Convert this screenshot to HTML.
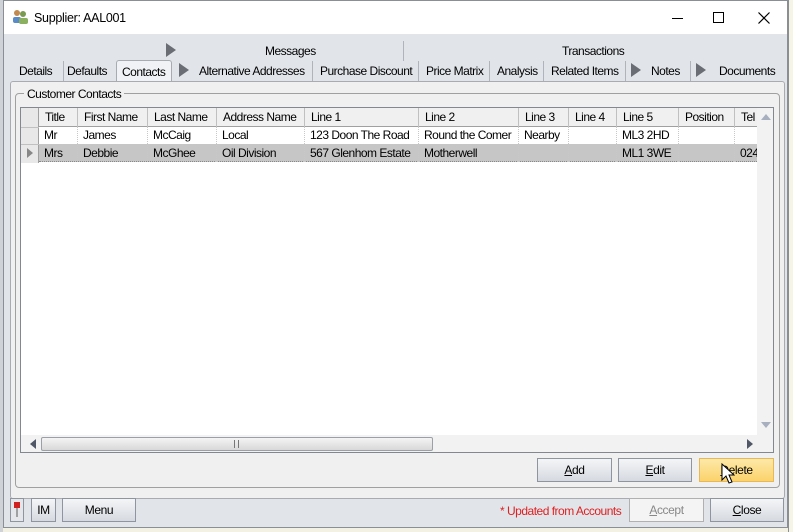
<!DOCTYPE html>
<html><head><style>
*{box-sizing:border-box;margin:0;padding:0}
body{width:793px;height:532px;overflow:hidden;background:#f3f1e4;font-family:"Liberation Sans",sans-serif;font-size:12px;color:#000;position:relative}
.a{position:absolute}
.win{left:3px;top:0;width:785px;height:528px;background:#e1e5ea;border:1px solid #8a8f96}
.t{white-space:nowrap;letter-spacing:-0.5px}
.btn{position:absolute;height:24px;border:1px solid #8e959e;background:linear-gradient(#f4f5f7,#d6dae0);text-align:center;line-height:22px;font-size:12px;letter-spacing:-0.4px}
.hd{position:absolute;top:0;height:19px;line-height:19px;padding-left:6px;border-right:1px solid #c0c0c0}
.cell{position:absolute;height:17px;line-height:17px;padding-left:5px;border-right:1px dotted #c8c8c8}
</style></head><body>
<div class="a" style="left:0;top:0;width:3px;height:532px;background:#cfd3d8"></div>
<div class="a" style="left:788px;top:0;width:5px;height:532px;background:#f6f4e6;border-left:1px solid #8a8f96"></div>
<div class="a win">
 <div class="a" style="left:0;top:0;width:783px;height:33px;background:#fff"></div>
 <svg class="a" style="left:8px;top:8px" width="17" height="15"><circle cx="5" cy="4" r="3" fill="#c08a50"/><circle cx="11" cy="5" r="3" fill="#7a9a50"/><rect x="1" y="8" width="8" height="6" rx="2" fill="#5a8ac8"/><rect x="7" y="9" width="9" height="6" rx="2" fill="#8ab060"/></svg>
 <div class="a t" style="left:30px;top:10px;font-size:12.5px;letter-spacing:-0.3px">Supplier: AAL001</div>
 <div class="a" style="left:668px;top:17px;width:11px;height:1px;background:#000"></div>
 <div class="a" style="left:709px;top:11px;width:11px;height:11px;border:1px solid #000"></div>
 <svg class="a" style="left:754px;top:11px" width="12" height="12"><path d="M0.5 0.5L11.5 11.5M11.5 0.5L0.5 11.5" stroke="#000" stroke-width="1.2"/></svg>

 <div class="a t" style="left:261px;top:43px">Messages</div>
 <div class="a t" style="left:558px;top:43px">Transactions</div>
 <div class="a" style="left:399px;top:40px;width:1px;height:20px;background:#b0b4ba"></div>
 <svg class="a" style="left:162px;top:42px" width="10" height="14"><path d="M0 0L10 7L0 14Z" fill="#6a6e74"/></svg>

 <div class="a t" style="left:15px;top:63px">Details</div>
 <div class="a" style="left:59px;top:60px;width:1px;height:20px;background:#b0b4ba"></div>
 <div class="a t" style="left:63px;top:63px">Defaults</div>
 <div class="a" style="left:112px;top:59px;width:56px;height:22px;background:#f0f2f5;border:1px solid #a8acb2;border-bottom:none;border-radius:3px 3px 0 0"></div>
 <div class="a t" style="left:118px;top:64px">Contacts</div>
 <svg class="a" style="left:175px;top:62px" width="10" height="14"><path d="M0 0L10 7L0 14Z" fill="#6a6e74"/></svg>
 <div class="a t" style="left:195px;top:63px">Alternative Addresses</div>
 <div class="a" style="left:308px;top:60px;width:1px;height:20px;background:#b0b4ba"></div>
 <div class="a t" style="left:316px;top:63px">Purchase Discount</div>
 <div class="a" style="left:414px;top:60px;width:1px;height:20px;background:#b0b4ba"></div>
 <div class="a t" style="left:422px;top:63px">Price Matrix</div>
 <div class="a" style="left:485px;top:60px;width:1px;height:20px;background:#b0b4ba"></div>
 <div class="a t" style="left:493px;top:63px">Analysis</div>
 <div class="a" style="left:539px;top:60px;width:1px;height:20px;background:#b0b4ba"></div>
 <div class="a t" style="left:547px;top:63px">Related Items</div>
 <div class="a" style="left:621px;top:60px;width:1px;height:20px;background:#b0b4ba"></div>
 <svg class="a" style="left:627px;top:62px" width="10" height="14"><path d="M0 0L10 7L0 14Z" fill="#6a6e74"/></svg>
 <div class="a t" style="left:647px;top:63px">Notes</div>
 <div class="a" style="left:686px;top:60px;width:1px;height:20px;background:#b0b4ba"></div>
 <svg class="a" style="left:692px;top:62px" width="10" height="14"><path d="M0 0L10 7L0 14Z" fill="#6a6e74"/></svg>
 <div class="a t" style="left:715px;top:63px">Documents</div>

 <div class="a" style="left:6px;top:80px;width:775px;height:418px;background:#f0f0f0;border:1px solid #a8acb2;border-radius:3px"></div>
 <div class="a" style="left:11px;top:92px;width:765px;height:395px;border:1px solid #a0a0a0;border-radius:4px"></div>
 <div class="a t" style="left:20px;top:86px;background:#f0f0f0;padding:0 3px">Customer Contacts</div>

 <div class="a" style="left:16px;top:106px;width:754px;height:346px;background:#fff;border:1px solid #828790;overflow:hidden">
  <div class="a" style="left:0;top:0;width:754px;height:19px;background:#f0f0f0;border-bottom:1px solid #a0a0a0"></div>
  <div class="a" style="left:0;top:0;width:18px;height:55px;background:#e8e8e8;border-right:1px solid #a0a0a0"></div>
  <div class="a" style="left:0;top:19px;width:18px;height:1px;background:#c0c0c0"></div><div class="a" style="left:0;top:36px;width:18px;height:1px;background:#c0c0c0"></div>
  <svg class="a" style="left:6px;top:40px" width="6" height="10"><path d="M0 0L6 5L0 10Z" fill="#888"/></svg>
  <div class="a" style="left:18px;top:36px;width:718px;height:18px;background:#c6c6c6;border-bottom:1px dotted #888"></div>
  <div class="a t" style="left:18px;top:0;width:718px;height:55px">
   <div class="hd" style="left:0;width:39px">Title</div><div class="hd" style="left:39px;width:70px">First Name</div><div class="hd" style="left:109px;width:69px">Last Name</div><div class="hd" style="left:178px;width:88px">Address Name</div><div class="hd" style="left:266px;width:114px">Line 1</div><div class="hd" style="left:380px;width:100px">Line 2</div><div class="hd" style="left:480px;width:50px">Line 3</div><div class="hd" style="left:530px;width:48px">Line 4</div><div class="hd" style="left:578px;width:62px">Line 5</div><div class="hd" style="left:640px;width:56px">Position</div><div class="hd" style="left:696px;width:30px;border:none">Tel</div>
   <div style="position:absolute;top:19px;left:0;width:718px">
   <div class="cell" style="left:0;width:39px">Mr</div><div class="cell" style="left:39px;width:70px">James</div><div class="cell" style="left:109px;width:69px">McCaig</div><div class="cell" style="left:178px;width:88px">Local</div><div class="cell" style="left:266px;width:114px">123 Doon The Road</div><div class="cell" style="left:380px;width:100px">Round the Comer</div><div class="cell" style="left:480px;width:50px">Nearby</div><div class="cell" style="left:530px;width:48px"></div><div class="cell" style="left:578px;width:62px">ML3 2HD</div><div class="cell" style="left:640px;width:56px"></div>
   </div>
   <div style="position:absolute;top:37px;left:0;width:718px">
   <div class="cell" style="left:0;width:39px">Mrs</div><div class="cell" style="left:39px;width:70px">Debbie</div><div class="cell" style="left:109px;width:69px">McGhee</div><div class="cell" style="left:178px;width:88px">Oil Division</div><div class="cell" style="left:266px;width:114px">567 Glenhom Estate</div><div class="cell" style="left:380px;width:100px">Motherwell</div><div class="cell" style="left:480px;width:50px"></div><div class="cell" style="left:530px;width:48px"></div><div class="cell" style="left:578px;width:62px">ML1 3WE</div><div class="cell" style="left:640px;width:56px"></div><div class="cell" style="left:696px;width:30px;border:none">024</div>
   </div>
  </div>
  <div class="a" style="left:736px;top:0;width:17px;height:327px;background:#f2f2f2"></div>
  <svg class="a" style="left:740px;top:6px" width="10" height="6"><path d="M0 6L5 0L10 6Z" fill="#a8b0c0"/></svg>
  <svg class="a" style="left:740px;top:314px" width="10" height="6"><path d="M0 0L5 6L10 0Z" fill="#a8b0c0"/></svg>
  <div class="a" style="left:0;top:327px;width:753px;height:17px;background:#f2f2f2"></div>
  <svg class="a" style="left:9px;top:331px" width="6" height="10"><path d="M6 0L0 5L6 10Z" fill="#505868"/></svg>
  <svg class="a" style="left:726px;top:331px" width="6" height="10"><path d="M0 0L6 5L0 10Z" fill="#505868"/></svg>
  <div class="a" style="left:20px;top:329px;width:392px;height:14px;border:1px solid #9aa0a8;border-radius:2px;background:linear-gradient(#f4f4f4,#d8d8d8)"></div>
  <div class="a" style="left:213px;top:332px;width:5px;height:8px;border-left:1px solid #777;border-right:1px solid #777"></div>
 </div>

 <div class="btn" style="left:533px;top:457px;width:75px"><u>A</u>dd</div>
 <div class="btn" style="left:614px;top:457px;width:74px"><u>E</u>dit</div>
 <div class="btn" style="left:695px;top:457px;width:75px;background:linear-gradient(#fde9a8,#fbd36a);border-color:#e8b858"><u>D</u>elete</div>
 <svg class="a" style="left:717px;top:462px" width="14" height="22"><path d="M1 1L1 17L5 13L8 20L11 19L8 12L13 12Z" fill="#fff" stroke="#000" stroke-width="1"/></svg>

 <div class="btn" style="left:6px;top:497px;width:14px;height:24px;background:#e4e6ea"></div>
 <svg class="a" style="left:9px;top:500px" width="8" height="18"><rect x="1" y="1" width="6" height="6" fill="#d02020"/><path d="M4 7L4 16" stroke="#888" stroke-width="1.5"/></svg>
 <div class="btn" style="left:27px;top:497px;width:25px">IM</div>
 <div class="btn" style="left:58px;top:497px;width:74px">Menu</div>
 <div class="a t" style="left:496px;top:503px;color:#e02020">* Updated from Accounts</div>
 <div class="btn" style="left:625px;top:497px;width:75px;background:#f4f4f4;color:#888;border-color:#b0b0b0"><u>A</u>ccept</div>
 <div class="btn" style="left:706px;top:497px;width:74px"><u>C</u>lose</div>
</div>
</body></html>
